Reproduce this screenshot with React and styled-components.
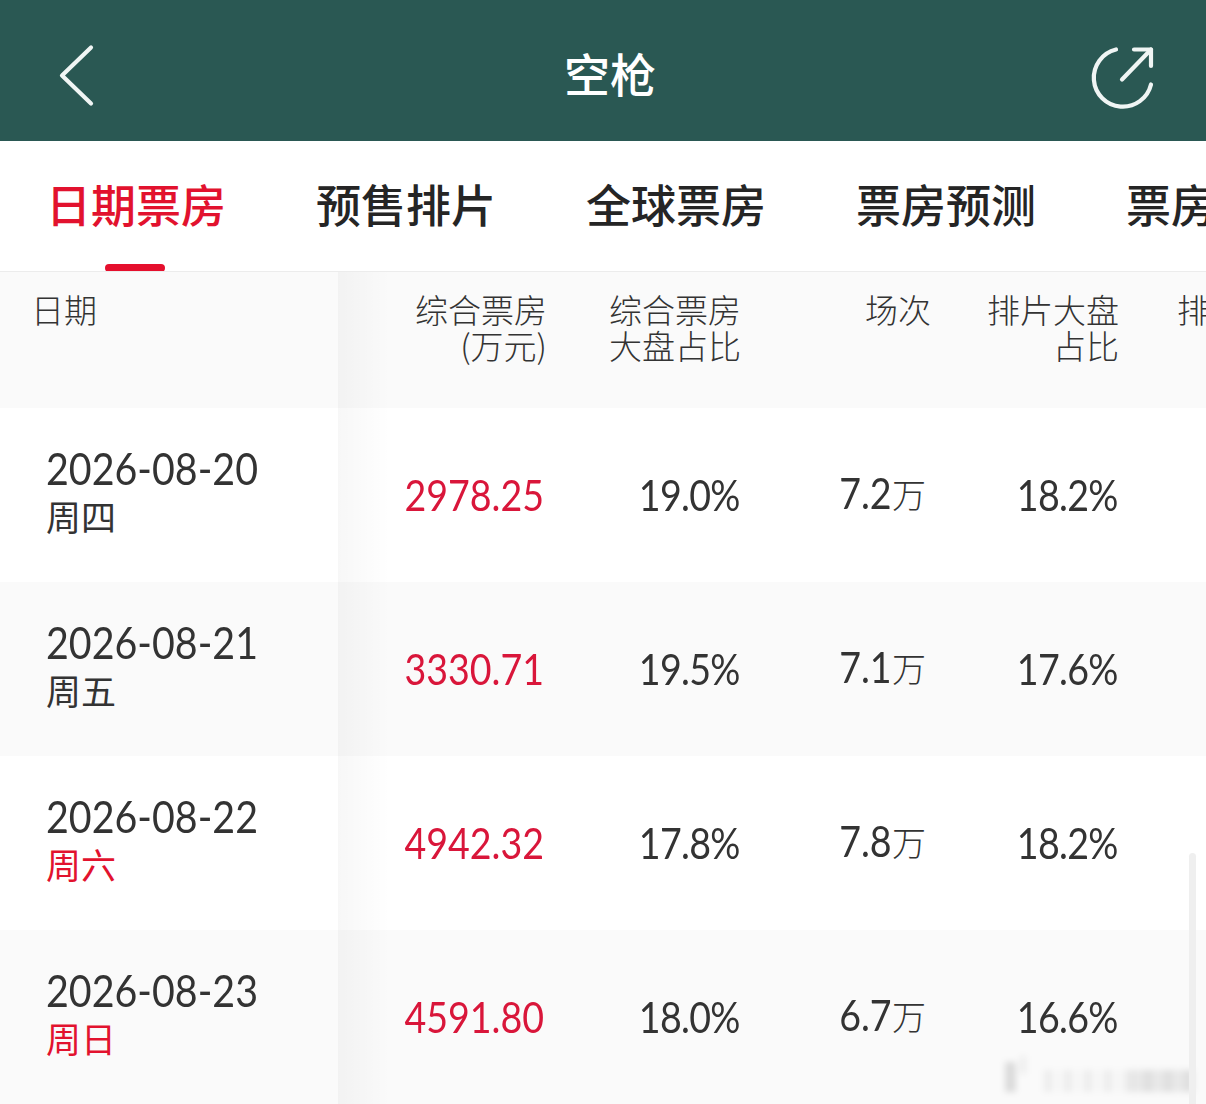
import React from "react";
import styled, { createGlobalStyle } from "styled-components";

const CJK = '"Noto Sans CJK SC", "Noto Sans", sans-serif';
const NUM = 'Lato, "Noto Sans CJK SC", sans-serif';

const GlobalStyle = createGlobalStyle`
  html, body {
    margin: 0;
    padding: 0;
    background: #fff;
    overflow: hidden;
  }
`;

const Page = styled.div`
  position: relative;
  width: 1206px;
  height: 1104px;
  overflow: hidden;
  font-family: ${CJK};
`;

const Header = styled.header`
  display: grid;
  grid-template-columns: 1fr auto 1fr;
  align-items: center;
  height: 141px;
  padding: 0 44px 0 58px;
  box-sizing: border-box;
  background: #2a5853;
`;

const Title = styled.h1`
  margin: 0;
  padding-top: 2px;
  font-size: 46px;
  font-weight: 500;
  line-height: 60px;
  color: #fff;
`;

const HeaderIcon = styled.svg`
  display: block;
  justify-self: ${(p) => (p.$end ? "end" : "start")};
  fill: none;
  stroke: #f0f5f4;
  stroke-width: 4.2;
  stroke-linecap: round;
  stroke-linejoin: round;
`;

const Tabs = styled.nav`
  display: flex;
  align-items: flex-start;
  gap: 90px;
  height: 131px;
  padding-left: 46px;
  box-sizing: border-box;
  border-bottom: 1px solid #ececec;
  white-space: nowrap;
  overflow: hidden;
`;

const Tab = styled.div`
  position: relative;
  flex: none;
  height: 130px;
  font-size: 45px;
  font-weight: 500;
  line-height: 125px;
  color: ${(p) => (p.$active ? "#e2122e" : "#252525")};

  ${(p) =>
    p.$active &&
    `&::after {
      content: "";
      position: absolute;
      left: 59px;
      bottom: -1px;
      width: 60px;
      height: 8px;
      border-radius: 4px;
      background: #e50f2d;
    }`}
`;

const Table = styled.div`
  position: relative;
  overflow: hidden;

  /* shadow cast by the pinned date column */
  &::after {
    content: "";
    position: absolute;
    top: 0;
    bottom: 0;
    left: 338px;
    width: 52px;
    background: linear-gradient(to right, rgba(0, 0, 0, 0.03), rgba(0, 0, 0, 0));
    pointer-events: none;
  }
`;

const Row = styled.div`
  display: grid;
  grid-template-columns: 338px 209px 194px 190px 188px 87px;
  height: ${(p) => (p.$head ? 136 : 174)}px;
  background: ${(p) => (p.$shade ? "#fafafa" : "#fff")};
`;

const HeadCell = styled.div`
  padding: 19px 0 0 ${(p) => p.$left || 0}px;
  font-size: 33px;
  font-weight: 300;
  line-height: 36px;
  color: #333;
  text-align: ${(p) => (p.$left ? "left" : "right")};
  white-space: ${(p) => (p.$clip ? "nowrap" : "pre-line")};
  overflow: ${(p) => (p.$clip ? "hidden" : "visible")};
`;

const DateCell = styled.div`
  display: flex;
  flex-direction: column;
  justify-content: center;
  padding: 0 0 8px 46px;
`;

// the app's digits are a narrow DIN-like face, Lato squeezed is the closest
const Digits = styled.span`
  display: inline-block;
  font-family: ${NUM};
  letter-spacing: ${(p) => (p.$tight ? "-0.8px" : "0")};
  transform: scaleX(0.895);
  transform-origin: ${(p) => (p.$fromLeft ? "left" : "right")} center;
`;

const DateText = styled.div`
  font-size: 44px;
  line-height: 48px;
  white-space: nowrap;
  color: #333;
`;

const Weekday = styled.div`
  font-size: 35px;
  font-weight: 400;
  line-height: 48px;
  color: ${(p) => (p.$weekend ? "#e2122e" : "#333")};
`;

const Value = styled.div`
  display: flex;
  align-items: center;
  justify-content: flex-end;
  padding-right: ${(p) => p.$pad || 1}px;
  padding-bottom: ${(p) => p.$lift || 0}px;
  font-size: 42px;
  color: ${(p) => (p.$red ? "#d9163a" : "#333")};
`;

const Unit = styled.span`
  font-size: 34px;
  font-weight: 300;
`;

const Scrollbar = styled.div`
  position: absolute;
  right: 10px;
  bottom: 0;
  width: 7px;
  height: 251px;
  border-radius: 4px 4px 0 0;
  background: #efefef;
`;

// blurred-out watermark in the corner of the screenshot
const Watermark = styled.div`
  position: absolute;
  left: 1002px;
  top: 1056px;
  width: 192px;
  height: 36px;
  filter: blur(3px);
  background:
    linear-gradient(rgba(0, 0, 0, 0.12), rgba(0, 0, 0, 0.12)) 3px 6px / 11px 30px no-repeat,
    linear-gradient(rgba(0, 0, 0, 0.05), rgba(0, 0, 0, 0.05)) 18px 0 / 6px 18px no-repeat,
    linear-gradient(rgba(0, 0, 0, 0.06), rgba(0, 0, 0, 0.06)) 128px 14px / 64px 22px no-repeat,
    repeating-linear-gradient(
        to right,
        rgba(0, 0, 0, 0.05) 0 8px,
        rgba(0, 0, 0, 0.01) 8px 20px
      )
      42px 14px / 150px 22px no-repeat;
`;

const tabs = ["日期票房", "预售排片", "全球票房", "票房预测", "票房分析"];

const rows = [
  { date: "2026-08-20", day: "周四", total: "2978.25", share: "19.0%", shows: "7.2", seat: "18.2%" },
  { date: "2026-08-21", day: "周五", total: "3330.71", share: "19.5%", shows: "7.1", seat: "17.6%" },
  { date: "2026-08-22", day: "周六", weekend: true, total: "4942.32", share: "17.8%", shows: "7.8", seat: "18.2%" },
  { date: "2026-08-23", day: "周日", weekend: true, total: "4591.80", share: "18.0%", shows: "6.7", seat: "16.6%" },
];

const App = () => {
  return (
    <>
      <GlobalStyle />
      <Page>
        <Header>
          <HeaderIcon width="38" height="84" viewBox="0 0 38 84">
            <path d="M33 18.5 L4 46.5 L33 74.5" />
          </HeaderIcon>
          <Title>空枪</Title>
          <HeaderIcon $end width="72" height="84" viewBox="0 0 72 84">
            <path d="M26 20.5 A29 29 0 1 0 61 55.5" />
            <path d="M32 50.5 L61 20.5" />
            <path d="M44 20.5 H61 V37" />
          </HeaderIcon>
        </Header>

        <Tabs>
          {tabs.map((t, i) => (
            <Tab key={t} $active={i === 0}>
              {t}
            </Tab>
          ))}
        </Tabs>

        <Table>
          <Row $head $shade>
            <HeadCell $left={31}>日期</HeadCell>
            <HeadCell>{"综合票房\n(万元)"}</HeadCell>
            <HeadCell>{"综合票房\n大盘占比"}</HeadCell>
            <HeadCell>场次</HeadCell>
            <HeadCell>{"排片大盘\n占比"}</HeadCell>
            <HeadCell $left={58} $clip>排片场次</HeadCell>
          </Row>
          {rows.map((r, i) => (
            <Row key={r.date} $shade={i % 2 === 1}>
              <DateCell>
                <DateText>
                  <Digits $fromLeft>{r.date}</Digits>
                </DateText>
                <Weekday $weekend={r.weekend}>{r.day}</Weekday>
              </DateCell>
              <Value $red $pad={3}><Digits>{r.total}</Digits></Value>
              <Value><Digits $tight>{r.share}</Digits></Value>
              <Value $pad={5} $lift={4}>
                <Digits>{r.shows}</Digits>
                <Unit>万</Unit>
              </Value>
              <Value><Digits $tight>{r.seat}</Digits></Value>
              <div />
            </Row>
          ))}
        </Table>

        <Watermark />
        <Scrollbar />
      </Page>
    </>
  );
};

export default App;
